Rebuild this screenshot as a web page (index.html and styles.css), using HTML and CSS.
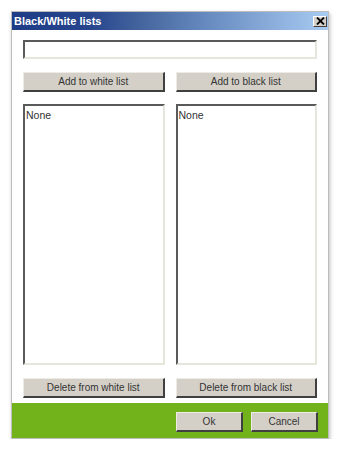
FILE: index.html
```html
<!DOCTYPE html>
<html>
<head>
<meta charset="utf-8">
<link rel="stylesheet" href="styles.css">
</head>
<body>
<div class="window">
  <div class="titlebar">
    <span class="title">Black/White lists</span>
    <span class="close"><svg width="9" height="8" viewBox="0 0 9 8"><path d="M1 0.5 L8 7.5 M8 0.5 L1 7.5" stroke="#000" stroke-width="1.8" fill="none"/></svg></span>
  </div>
  <div class="content">
    <div class="input"></div>
    <div class="row row-add">
      <div class="btn">Add to white list</div>
      <div class="btn">Add to black list</div>
    </div>
    <div class="row row-lists">
      <div class="list">None</div>
      <div class="list">None</div>
    </div>
    <div class="row row-del">
      <div class="btn">Delete from white list</div>
      <div class="btn">Delete from black list</div>
    </div>
  </div>
  <div class="footer">
    <div class="btn small">Ok</div>
    <div class="btn small">Cancel</div>
  </div>
</div>
</body>
</html>
```
FILE: styles.css
```css
html, body {
  margin: 0;
  padding: 0;
  background: #ffffff;
}
body {
  font-family: "Liberation Sans", Arial, sans-serif;
  font-size: 10px;
  color: #333;
}
.window {
  margin: 11px 0 0 11px;
  width: 316px;
  border: 1px solid #bdbdbd;
  background: #fff;
  box-shadow: 1px 2px 4px rgba(0,0,0,0.25);
}
.titlebar {
  height: 18px;
  display: flex;
  align-items: center;
  justify-content: space-between;
  padding: 0 1px 0 2px;
  background: linear-gradient(to right, #1f3c86 0%, #27468e 25%, #46679f 42%, #6488bd 60%, #86a9d8 80%, #a8cbf2 100%);
}
.title {
  color: #fff;
  font-weight: bold;
  font-size: 11px;
}
.close {
  width: 14px;
  height: 11px;
  box-sizing: border-box;
  background: #d4d0c8;
  border: 1px solid;
  border-color: #fff #404040 #404040 #fff;
  display: flex;
  align-items: center;
  justify-content: center;
}
.content {
  padding: 10px 11px 5px 11px;
  display: flex;
  flex-direction: column;
}
.input {
  height: 19px;
  box-sizing: border-box;
  border: 2px solid;
  border-color: #5a5a5a #e6e6dc #e6e6dc #5a5a5a;
  background: #fff;
}
.row {
  display: flex;
  gap: 11px;
}
.row > * {
  flex: 1;
}
.row-add {
  margin-top: 13px;
}
.row-lists {
  margin-top: 12px;
}
.row-del {
  margin-top: 13px;
}
.btn {
  height: 20px;
  box-sizing: border-box;
  background: #d4d0c8;
  border: 1px solid;
  border-color: #ecebe6 #404040 #404040 #ecebe6;
  border-width: 1px 2px 2px 1px;
  display: flex;
  align-items: center;
  justify-content: center;
  color: #333;
  font-size: 10px;
}
.list {
  height: 261px;
  box-sizing: border-box;
  border: 2px solid;
  border-color: #5a5a5a #e6e6dc #e6e6dc #5a5a5a;
  padding: 3px 0 0 1px;
  font-size: 10.5px;
}
.footer {
  background: #72b21a;
  height: 35px;
  display: flex;
  justify-content: flex-end;
  align-items: flex-start;
  gap: 8px;
  padding: 9px 10px 0 0;
  box-sizing: border-box;
}
.btn.small {
  width: 67px;
}
```
